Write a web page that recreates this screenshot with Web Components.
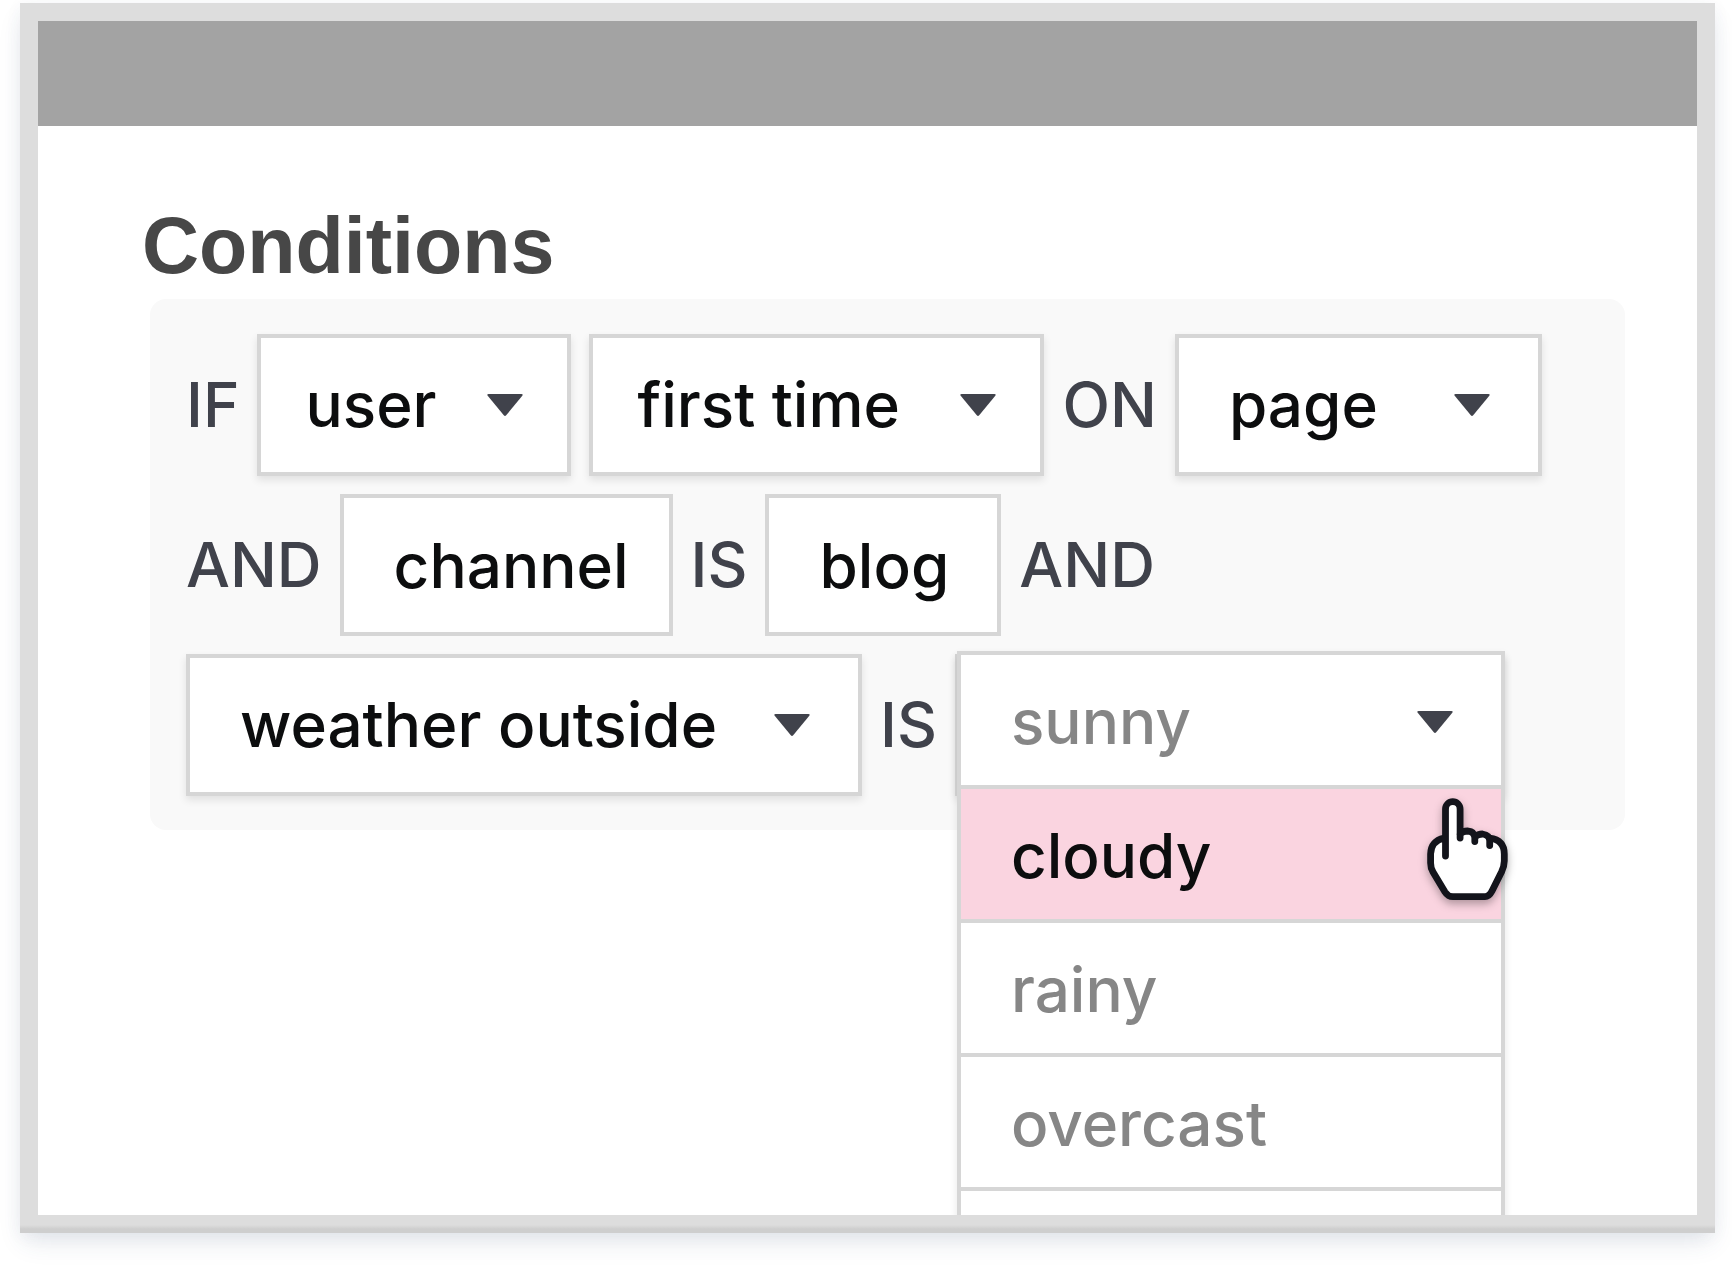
<!DOCTYPE html>
<html lang="en">
<head>
<meta charset="utf-8">
<title>Conditions</title>
<style>
  html, body { margin: 0; background: #fff; }
  body {
    box-sizing: border-box;
    height: 100vh;
    padding: 3px 17px 33px 20px;
    overflow: hidden;
    font-family: Inter, "Liberation Sans", sans-serif;
    font-size: 62px;
    line-height: 76px;
    font-weight: 500;
    --line: #d6d6d6;
    --ink: #0c0d0e;
    --label: #40424b;
    --muted: #868686;
  }
</style>
</head>
<body>
<app-window>
  <condition-panel heading="Conditions">
    <condition-row>
      <condition-word>IF</condition-word>
      <condition-select label="Subject" value="user" class="tight"></condition-select>
      <condition-select label="Visit" value="first time" class="tight wide"></condition-select>
      <condition-word>ON</condition-word>
      <condition-select label="Place" value="page" class="roomy"></condition-select>
    </condition-row>
    <condition-row>
      <condition-word>AND</condition-word>
      <condition-text label="Attribute" value="channel"></condition-text>
      <condition-word>IS</condition-word>
      <condition-text label="Attribute value" value="blog" class="roomy"></condition-text>
      <condition-word>AND</condition-word>
    </condition-row>
    <condition-row>
      <condition-select label="Weather attribute" value="weather outside"></condition-select>
      <condition-word>IS</condition-word>
      <condition-menu label="Weather" value="sunny" active="cloudy" options="cloudy,rainy,overcast,"></condition-menu>
    </condition-row>
  </condition-panel>
</app-window>

<script>
  const ARROW = `<svg class="arrow" viewBox="0 0 36 22" width="36" height="22" aria-hidden="true">
    <path d="M1.600 0H34.400Q36.400 0 35.300 1.700L19.200 21.300Q18 22.600 16.800 21.300L.7 1.700Q-.4 0 1.600 0Z" fill="#40424b"/></svg>`;

  class AppWindow extends HTMLElement {
    constructor() {
      super();
      this.attachShadow({ mode: 'open' }).innerHTML = `
        <style>
          :host {
            display: flex; flex-direction: column; box-sizing: border-box; height: 100%;
            border: 18px solid #ddd; background: #fff;
            box-shadow: 0 12px 24px -4px rgba(50, 70, 110, .13), 0 3px 16px rgba(50, 70, 110, .05);
            border-image: linear-gradient(to top, #cecece 0, #cecece 4px, #ddd 8px) 18;
          }
          header { flex: none; height: 105px; background: #a3a3a3; }
          main { flex: 1; min-height: 0; overflow: hidden; padding: 74px 72px 0 106px; }
        </style>
        <header></header>
        <main><slot></slot></main>`;
    }
  }

  class ConditionPanel extends HTMLElement {
    constructor() {
      super();
      this.attachShadow({ mode: 'open' }).innerHTML = `
        <style>
          :host { display: block; }
          h1 { margin: 0 0 8px -2px; font: bold 79px/91px "Liberation Sans", Arial, sans-serif; color: #474747; }
          section {
            display: flex; flex-direction: column; gap: 18px;
            padding: 35px 36px 34px; margin-left: 6px; border-radius: 16px; background: #f9f9f9;
          }
        </style>
        <h1 id="t">${this.getAttribute('heading')}</h1>
        <section aria-labelledby="t"><slot></slot></section>`;
    }
  }

  class ConditionRow extends HTMLElement {
    constructor() {
      super();
      this.attachShadow({ mode: 'open' }).innerHTML = `
        <style>:host { display: flex; align-items: center; gap: 18px; height: 142px; }</style>
        <slot></slot>`;
    }
  }

  class ConditionWord extends HTMLElement {
    constructor() {
      super();
      this.attachShadow({ mode: 'open' }).innerHTML = `
        <style>:host { display: block; color: var(--label); font-weight: 450; }</style>
        <slot></slot>`;
    }
  }

  class ConditionSelect extends HTMLElement {
    constructor() {
      super();
      const value = this.getAttribute('value');
      this.attachShadow({ mode: 'open' }).innerHTML = `
        <style>
          :host { display: grid; align-items: center; --side: 50px; --end: 48px; --room: 56px; }
          :host(.tight) { --side: 44px; --end: 44px; --room: 50px; }
          :host(.wide) { --room: 60px; }
          :host(.roomy) { --room: 76px; }
          select {
            grid-area: 1 / 1; appearance: none; box-sizing: border-box; height: 142px; margin: 0;
            padding: 0 calc(var(--end) + 36px + var(--room)) 0 var(--side);
            border: 4px solid var(--line); border-radius: 0; background: #fff;
            font: inherit; color: var(--ink); box-shadow: 0 4px 8px rgba(0, 0, 0, .1);
          }
          .arrow { grid-area: 1 / 1; justify-self: end; margin-right: calc(var(--end) + 4px); pointer-events: none; }
        </style>
        <select aria-label="${this.getAttribute('label')}"><option>${value}</option></select>
        ${ARROW}`;
    }
  }

  class ConditionText extends HTMLElement {
    constructor() {
      super();
      this.attachShadow({ mode: 'open' }).innerHTML = `
        <style>
          :host { display: block; --end: 40px; }
          :host(.roomy) { --end: 48px; }
          input {
            display: block; field-sizing: content; box-sizing: border-box; height: 142px; margin: 0; padding: 0 var(--end) 0 50px;
            border: 4px solid var(--line); border-radius: 0; background: #fff; font: inherit; color: var(--ink);
          }
        </style>
        <input type="text" aria-label="${this.getAttribute('label')}" value="${this.getAttribute('value')}">`;
    }
  }

  class ConditionMenu extends HTMLElement {
    constructor() {
      super();
      const active = this.getAttribute('active');
      const items = this.getAttribute('options').split(',').map(o =>
        `<button type="button" role="option" aria-selected="${o === active}"${o ? '' : ' aria-label="more"'}>${o}</button>`).join('');
      this.attachShadow({ mode: 'open' }).innerHTML = `
        <style>
          :host { display: block; position: relative; }
          .field {
            box-sizing: border-box; width: 550px; height: 142px;
            border: 4px solid var(--line); background: #fff; box-shadow: 0 4px 8px rgba(0, 0, 0, .1);
          }
          .popup {
            position: absolute; left: 2px; top: -3px; box-sizing: border-box; width: 548px;
            border: 4px solid var(--line); background: #fff; box-shadow: 0 4px 8px rgba(0, 0, 0, .1);
          }
          button {
            display: flex; align-items: center; justify-content: space-between; box-sizing: border-box;
            width: 100%; height: 134px; margin: 0; padding: 4px 48px 0 50px; border: 0; border-bottom: 4px solid var(--line);
            background: #fff; font: inherit; color: var(--muted); text-align: left;
          }
          button[aria-selected="true"] { background: #fad4e0; color: var(--ink); }
          .hand { position: absolute; left: 452px; top: 130px; filter: drop-shadow(0 4px 4px rgba(0, 0, 0, .3)); pointer-events: none; }
        </style>
        <div class="field"></div>
        <div class="popup">
          <button type="button" aria-haspopup="listbox" aria-expanded="true">${this.getAttribute('value')}${ARROW}</button>
          <div role="listbox" aria-label="${this.getAttribute('label')}">${items}</div>
          <svg class="hand" viewBox="0 0 110 130" width="110" height="130" aria-hidden="true">
            <g fill="#fff" stroke="#13141b" stroke-width="6.800" stroke-linecap="round" stroke-linejoin="round">
              <path stroke="none" d="M32.500 71V24a7.300 7.300 0 0 1 14.600 0V48Q57 43 61 50Q71 46 76 53Q91 55 91.300 69V76Q91 81 88 87L79 106Q76 111.700 72 111.700H40Q35 111.700 32 107L20 87Q17.600 83 17.600 78V69Q18 56 31 53"/>
              <path fill="none" d="M32.500 71V24a7.300 7.300 0 0 1 14.600 0V53M47.100 49Q50 46 54.500 46Q61.800 46.500 61.800 53V56.500M61.800 52Q65 49 69.500 49Q76.700 50 76.700 56V60.500M76.700 53Q91.300 55 91.300 69V76Q91.300 81 88.500 87L79 106Q76 111.700 72 111.700H40Q35 111.700 32 107L20 87Q17.600 83 17.600 78V69Q18 56 31 53"/>
            </g>
          </svg>
        </div>`;
    }
  }

  customElements.define('app-window', AppWindow);
  customElements.define('condition-panel', ConditionPanel);
  customElements.define('condition-row', ConditionRow);
  customElements.define('condition-word', ConditionWord);
  customElements.define('condition-select', ConditionSelect);
  customElements.define('condition-text', ConditionText);
  customElements.define('condition-menu', ConditionMenu);
</script>
</body>
</html>
